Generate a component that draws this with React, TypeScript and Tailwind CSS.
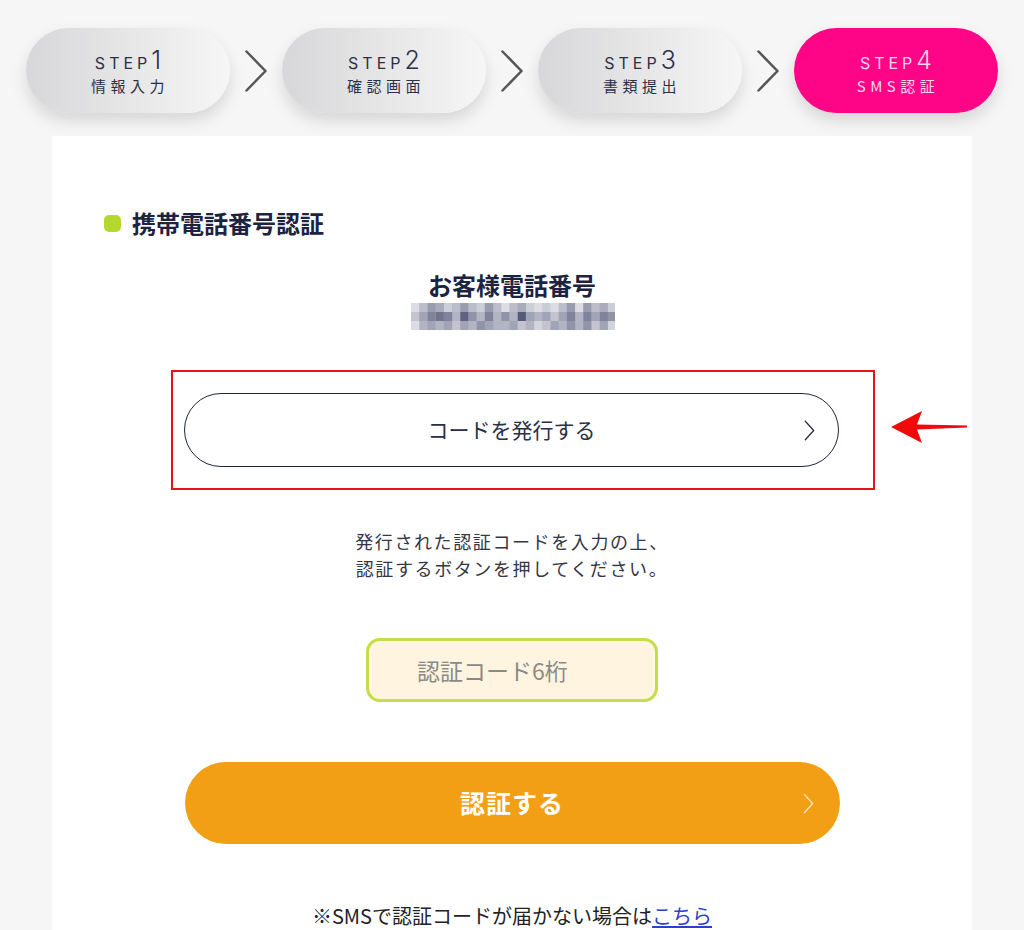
import React from "react";

const jp = { fontFamily: '"Noto Sans CJK JP", "Noto Sans", sans-serif' };
const stepFont = { fontFamily: 'Inter, "Noto Sans", sans-serif' };

function Chevron({ className = "", color = "#555", w = 24, h = 44, sw = 2.5 }: { className?: string; color?: string; w?: number; h?: number; sw?: number }) {
  return (
    <svg width={w} height={h} viewBox={`0 0 ${w} ${h}`} className={className} fill="none">
      <path d={`M${sw} ${sw} L${w - sw} ${h / 2} L${sw} ${h - sw}`} stroke={color} strokeWidth={sw} strokeLinecap="round" strokeLinejoin="round" />
    </svg>
  );
}

function StepPill({ num, label, active }: { num: string; label: string; active?: boolean }) {
  return (
    <div
      className={
        "w-[204px] h-[85px] rounded-full flex flex-col items-center justify-center shadow-[0_8px_16px_rgba(0,0,0,0.13)] " +
        (active ? "bg-[#fe0487] text-[#fcd6ea]" : "bg-gradient-to-r from-[#d7d7d9] to-[#f6f6f6] text-[#2b3048]")
      }
    >
      <div className="flex items-baseline h-[30px] leading-[30px]" style={stepFont}>
        <span className="text-[16px] tracking-[4px]">STEP</span>
        <span className="text-[25px] font-light">{num}</span>
      </div>
      <div className="text-[15px] tracking-[4.5px] leading-[20px] mt-[1px] pl-[4px]" style={jp}>
        {label}
      </div>
    </div>
  );
}

function Blur() {
  const cols = 25;
  const rows = [
    [0.1, 0.3, 0.5, 0.4, 0.2, 0.3, 0.5, 0.3, 0.2, 0.5, 0.3, 0.1, 0.3, 0.4, 0.2, 0.1, 0.2, 0.1, 0.3, 0.5, 0.1, 0.5, 0.3, 0.4, 0.2],
    [0.25, 0.45, 0.65, 0.75, 0.65, 0.35, 0.85, 0.55, 0.35, 0.65, 0.35, 0.55, 0.35, 0.9, 0.45, 0.35, 0.45, 0.25, 0.45, 0.65, 0.35, 0.65, 0.45, 0.65, 0.55],
    [0.1, 0.35, 0.45, 0.35, 0.45, 0.25, 0.45, 0.35, 0.55, 0.45, 0.35, 0.35, 0.45, 0.25, 0.35, 0.15, 0.25, 0.45, 0.35, 0.55, 0.35, 0.55, 0.25, 0.45, 0.15],
  ];
  return (
    <svg width={204} height={27} viewBox="0 0 204 27">
      {rows.map((r, ri) =>
        r.slice(0, cols).map((v, ci) => (
          <rect key={ri + "-" + ci} x={ci * 8.2} y={ri * 9} width={8.3} height={9} fill={`rgba(70,75,110,${v * 0.9 + 0.1})`} />
        ))
      )}
    </svg>
  );
}

export default function App() {
  return (
    <div className="w-[1024px] h-[930px] overflow-hidden bg-[#f6f6f6]" style={jp}>
      {/* Steps */}
      <div className="flex items-center pt-[28px] pl-[26px]">
        <StepPill num="1" label="情報入力" />
        <div className="w-[52px] flex justify-center">
          <Chevron />
        </div>
        <StepPill num="2" label="確認画面" />
        <div className="w-[52px] flex justify-center">
          <Chevron />
        </div>
        <StepPill num="3" label="書類提出" />
        <div className="w-[52px] flex justify-center">
          <Chevron />
        </div>
        <StepPill num="4" label="SMS認証" active />
      </div>

      {/* Card */}
      <div className="mx-[52px] mt-[23px] bg-white h-[800px] pt-[72px]">
        <div className="flex items-center pl-[52px] h-[30px]">
          <span className="w-[17px] h-[17px] rounded-[5px] bg-[#b6d82e] mr-[11px]" />
          <span className="text-[24px] font-bold text-[#1d2340] leading-[30px]">携帯電話番号認証</span>
        </div>

        <div className="mt-[32px] text-center text-[24px] font-bold text-[#1d2340] leading-[30px]">お客様電話番号</div>
        <div className="flex justify-center mt-[3px] pl-[2px]">
          <Blur />
        </div>

        {/* annotated button */}
        <div className="relative mt-[40px] ml-[119px] w-[704px] h-[120px] border-2 border-[#e8101a] pl-[11px] pt-[21px]">
          <div className="w-[655px] h-[74px] rounded-full border-[1.5px] border-[#1f2440] flex items-center justify-center relative">
            <span className="text-[21px] text-[#2a2f45]">コードを発行する</span>
            <Chevron className="absolute right-[23px]" color="#2a2f45" w={11} h={21} sw={1.3} />
          </div>
          <svg className="absolute left-[716px] top-[37px]" width="80" height="36" viewBox="0 0 80 36">
            <path d="M2 18 L33 2 L28 15.5 L78 16.5 L78 18.5 L28 20.5 L33 34 Z" fill="#f00a0a" />
          </svg>
        </div>

        <div className="mt-[38px] text-center text-[18px] tracking-[1.6px] leading-[26.5px] text-[#333645]">
          発行された認証コードを入力の上、
          <br />
          認証するボタンを押してください。
        </div>

        <div className="flex justify-center mt-[57px]">
          <div className="w-[292px] h-[64px] rounded-[14px] border-[3px] border-[#c3de4a] bg-[#fff4df] flex items-center pl-[48px]">
            <span className="text-[23px] text-[#8a8a8a]">認証コード6桁</span>
          </div>
        </div>

        <div className="flex justify-center mt-[60px]">
          <div className="w-[655px] h-[82px] rounded-full bg-[#f29f16] flex items-center justify-center relative">
            <span className="text-[25px] font-bold text-white tracking-[1px]">認証する</span>
            <Chevron className="absolute right-[26px]" color="#fde9c4" w={11} h={21} sw={1.4} />
          </div>
        </div>

        <div className="mt-[59px] text-center text-[20px] leading-[26px] text-[#222]">
          ※SMSで認証コードが届かない場合は<span className="text-[#2b3fd0] underline underline-offset-2">こちら</span>
        </div>
      </div>
    </div>
  );
}
